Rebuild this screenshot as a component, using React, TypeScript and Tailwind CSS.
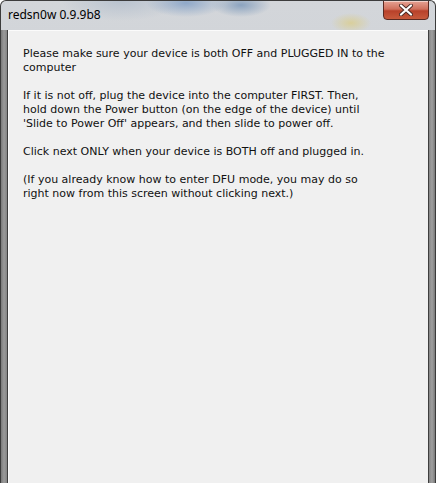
export default function App() {
  const body = { fontFamily: '"DejaVu Sans", Verdana, sans-serif' }

  return (
    <div className="w-[436px] h-[502px] bg-white">
      <div className="w-[436px] h-[483px] flex flex-col border-x border-t border-[#3c3c3c] rounded-t-[6px] overflow-hidden bg-[linear-gradient(180deg,#d3d6da_0%,#c4c8cd_100%)]">
        {/* title bar */}
        <div className="h-[29px] flex items-start relative bg-[radial-gradient(ellipse_40px_14px_at_185px_2px,#8fa8c8,transparent),radial-gradient(ellipse_30px_12px_at_240px_4px,#8ba3bf,transparent),radial-gradient(ellipse_20px_10px_at_350px_22px,#d9cf9c,transparent),radial-gradient(ellipse_60px_20px_at_120px_0px,#b9c3cf,transparent)]">
          <span className="pl-[7px] pt-[6px] text-[12px] text-black leading-[16px]" style={{ fontFamily: '"Noto Sans", "Open Sans", sans-serif' }}>
            redsn0w 0.9.9b8
          </span>
          <div className="ml-auto mr-[6px] w-[46px] h-[20px] -mt-px flex items-center justify-center rounded-b-[4px] border border-[#5a2a22] bg-[linear-gradient(180deg,#e6a394_0%,#d0705c_45%,#b8412a_55%,#c75a3c_100%)] shadow-[inset_0_1px_0_rgba(255,255,255,0.5)]">
            <svg width="14" height="12" viewBox="0 0 14 12">
              <path d="M2 1.5 L12 10.5 M12 1.5 L2 10.5" stroke="#4a2a24" strokeWidth="4" strokeLinecap="round" />
              <path d="M2 1.5 L12 10.5 M12 1.5 L2 10.5" stroke="#ffffff" strokeWidth="2.2" strokeLinecap="round" />
            </svg>
          </div>
        </div>

        {/* frame + client */}
        <div className="flex-1 flex">
          <div className="w-[7px] border-r border-[#3e3e3e] bg-[linear-gradient(90deg,#7a7a7a,#9a9a9a_50%,#858585)]" />
          <div className="flex-1 bg-[#f0f0f0] border-t border-l border-[#fbfbfb] px-[14px] pt-[16px] text-[11px] leading-[14px] text-[#111]" style={body}>
            <p className="whitespace-nowrap">
              Please make sure your device is both OFF and PLUGGED IN to the
              <br />
              computer
            </p>
            <p className="mt-[14px] whitespace-nowrap">
              If it is not off, plug the device into the computer FIRST. Then,
              <br />
              hold down the Power button (on the edge of the device) until
              <br />
              'Slide to Power Off' appears, and then slide to power off.
            </p>
            <p className="mt-[14px] whitespace-nowrap">Click next ONLY when your device is BOTH off and plugged in.</p>
            <p className="mt-[14px] whitespace-nowrap">
              (If you already know how to enter DFU mode, you may do so
              <br />
              right now from this screen without clicking next.)
            </p>
          </div>
          <div className="w-[7px] border-l border-[#3e3e3e] bg-[linear-gradient(90deg,#858585,#a0a0a0_50%,#7a7a7a)]" />
        </div>
      </div>
    </div>
  )
}
